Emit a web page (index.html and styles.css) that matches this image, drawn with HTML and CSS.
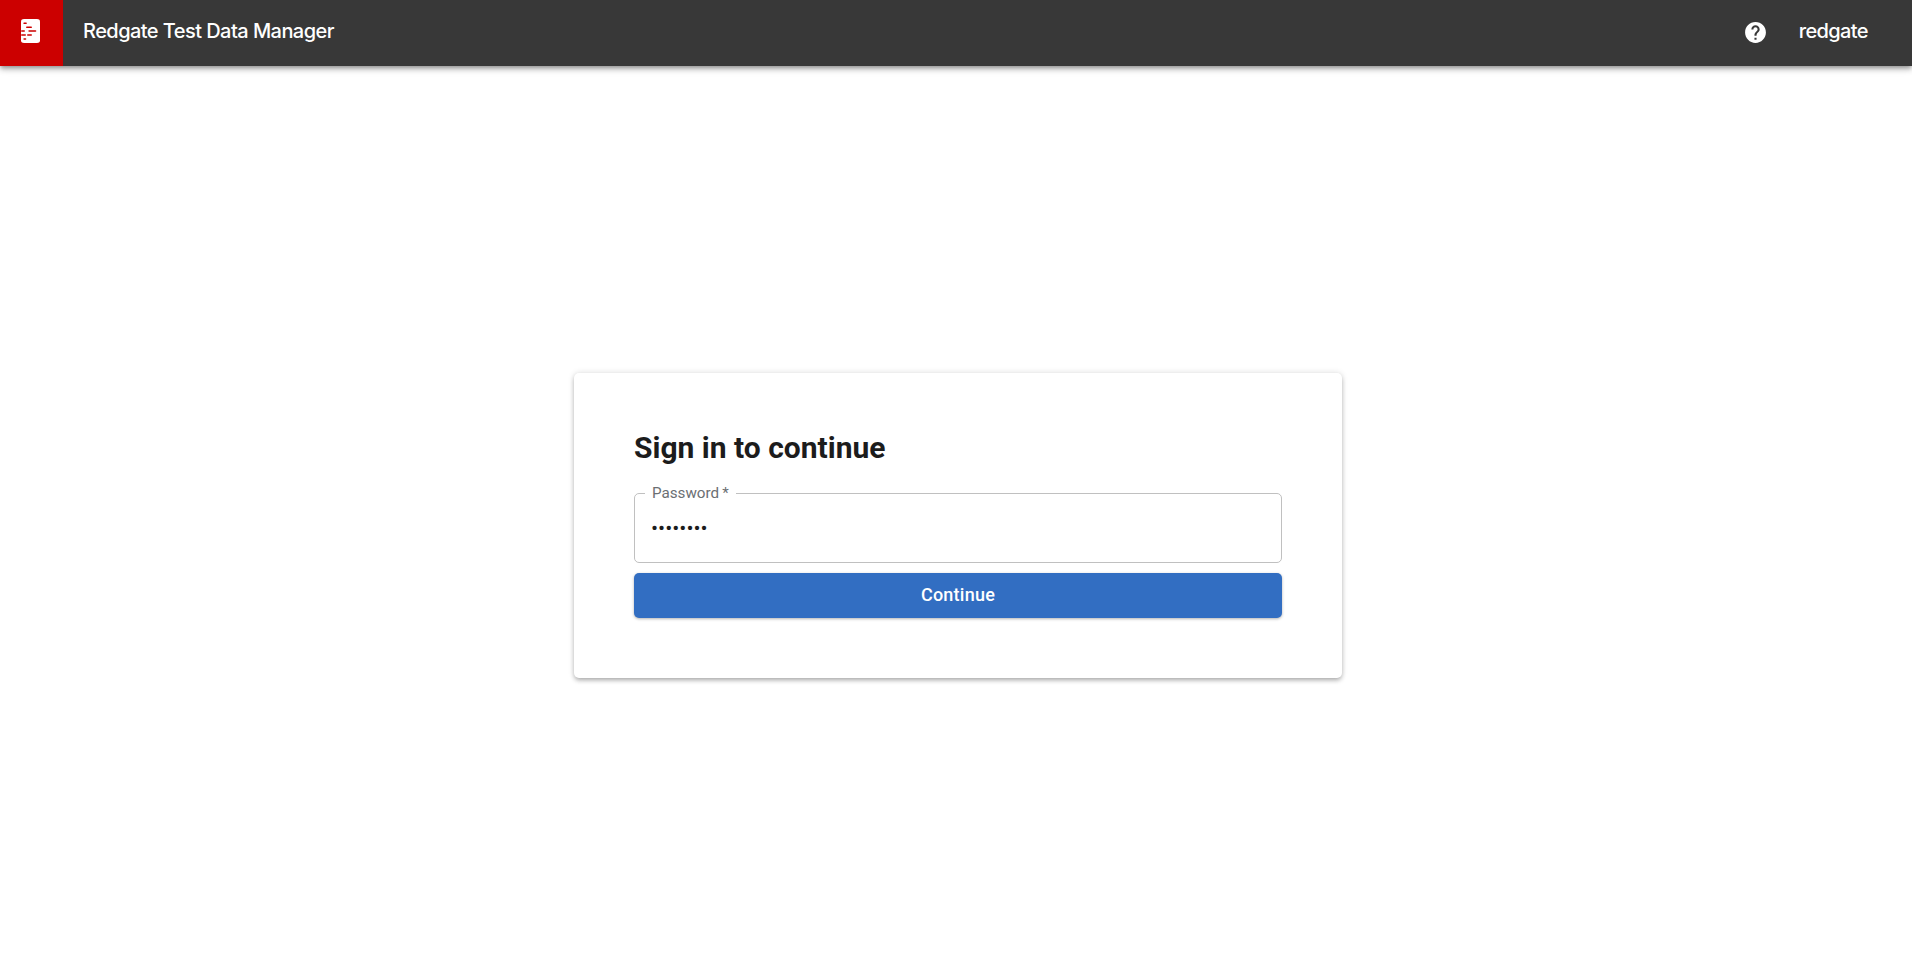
FILE: index.html
```html
<!DOCTYPE html>
<html lang="en">
<head>
  <meta charset="UTF-8">
  <title>Redgate Test Data Manager</title>
  <link rel="stylesheet" href="styles.css">
</head>
<body>
  <header class="topbar">
    <div class="logo-box">
      <svg class="logo-icon" viewBox="0 0 19 24" aria-hidden="true">
        <path fill="#fff" d="M3 0h13c1.500 0 3 .7 3 2.500v19c0 1.800-1.500 2.500-3 2.500H3c-1.500 0-3-.7-3-2.500v-19C0 .7 1.500 0 3 0z"/>
        <g fill="#cc0000">
          <rect x="2.300" y="3.500" width="3.600" height="1.600" rx=".8"/>
          <rect x="5" y="7.500" width="6" height="1.600" rx=".8"/>
          <rect x="0" y="11.200" width="4" height="1.600" rx=".8"/>
          <rect x="7.300" y="11.200" width="8" height="1.600" rx=".8"/>
          <rect x="0" y="15.200" width="5" height="1.600" rx=".8"/>
          <rect x="6" y="15.200" width="5" height="1.600" rx=".8"/>
          <rect x="2.300" y="19.200" width="3" height="1.600" rx=".8"/>
        </g>
      </svg>
    </div>
    <div class="app-title">Redgate Test Data Manager</div>
    <a class="help-link" href="#" aria-label="Help">
      <svg viewBox="0 0 24 24"><path fill="#fff" d="M12 2C6.480 2 2 6.480 2 12s4.480 10 10 10 10-4.480 10-10S17.520 2 12 2zm1 17h-2v-2h2v2zm2.070-7.750l-.9.920C13.450 12.900 13 13.500 13 15h-2v-.5c0-1.100.45-2.100 1.170-2.830l1.240-1.260c.37-.36.59-.86.59-1.410 0-1.100-.9-2-2-2s-2 .9-2 2H8c0-2.210 1.790-4 4-4s4 1.790 4 4c0 .88-.36 1.680-.93 2.250z"/></svg>
    </a>
    <div class="brand">redgate</div>
  </header>

  <main class="content">
    <form class="card">
      <h1>Sign in to continue</h1>
      <fieldset class="field">
        <legend>Password&thinsp;*</legend>
        <input type="password" value="12345678" aria-label="Password">
      </fieldset>
      <button type="button">Continue</button>
    </form>
  </main>
</body>
</html>
```

FILE: styles.css
```css
* {
  box-sizing: border-box;
}

html, body {
  height: 100%;
}

body {
  margin: 0;
  display: flex;
  flex-direction: column;
  font-family: Roboto, Arial, sans-serif;
  background-color: #fff;
  color: #1c1c1c;
  overflow: hidden;
}

.topbar {
  height: 66px;
  flex: none;
  display: flex;
  align-items: center;
  background-color: #383838;
  box-shadow: 0 2px 4px -1px rgba(0, 0, 0, 0.3), 0 4px 5px rgba(0, 0, 0, 0.16), 0 1px 10px rgba(0, 0, 0, 0.12);
  color: #fff;
  font-family: Inter, Arial, sans-serif;
}

.logo-box {
  width: 63px;
  height: 66px;
  padding: 0 2px 4px 0;
  display: flex;
  align-items: center;
  justify-content: center;
  background-color: #cc0000;
}

.logo-icon {
  width: 19px;
  height: 24px;
}

.app-title {
  margin-left: 20px;
  padding-bottom: 4px;
  font-size: 20px;
  font-weight: 500;
  letter-spacing: -0.55px;
  flex: 1;
}

.help-link {
  width: 25px;
  height: 25px;
  margin-bottom: 2px;
  display: block;
}

.help-link svg {
  width: 25px;
  height: 25px;
  display: block;
}

.brand {
  margin-left: 31px;
  margin-right: 44px;
  padding-bottom: 4px;
  font-size: 20px;
  font-weight: 500;
  letter-spacing: -0.6px;
}

.content {
  flex: 1;
  display: flex;
  align-items: center;
  justify-content: center;
  padding: 17px 0 0 4px;
}

.card {
  width: 768px;
  height: 305px;
  padding: 60px;
  border-radius: 5px;
  background-color: #fff;
  box-shadow: 0 3px 5px -1px rgba(0, 0, 0, 0.3), 0 0 6px rgba(0, 0, 0, 0.14);
}

h1 {
  margin: 0 0 22px;
  font-size: 30px;
  line-height: 30px;
  font-weight: 700;
}

.field {
  height: 78px;
  margin: 0;
  padding: 0 16px;
  border: 1px solid #c0c0c0;
  border-radius: 5px;
}

.field legend {
  padding: 0 7px;
  margin-left: -6px;
  font-size: 15.2px;
  line-height: 16px;
  color: #6b6f73;
}

.field input {
  width: 100%;
  height: 54px;
  padding: 0;
  border: 0;
  outline: 0;
  font-family: Roboto, Arial, sans-serif;
  font-size: 21px;
  color: #1c1c1c;
}

button {
  width: 100%;
  height: 45px;
  margin-top: 10px;
  padding: 0 0 3px;
  border: 0;
  border-radius: 5px;
  background-color: #326ec2;
  color: #fff;
  font-family: Roboto, Arial, sans-serif;
  font-size: 18px;
  font-weight: 500;
  letter-spacing: 0.25px;
  cursor: pointer;
  box-shadow: 0 1px 3px rgba(0, 0, 0, 0.3);
}
```
